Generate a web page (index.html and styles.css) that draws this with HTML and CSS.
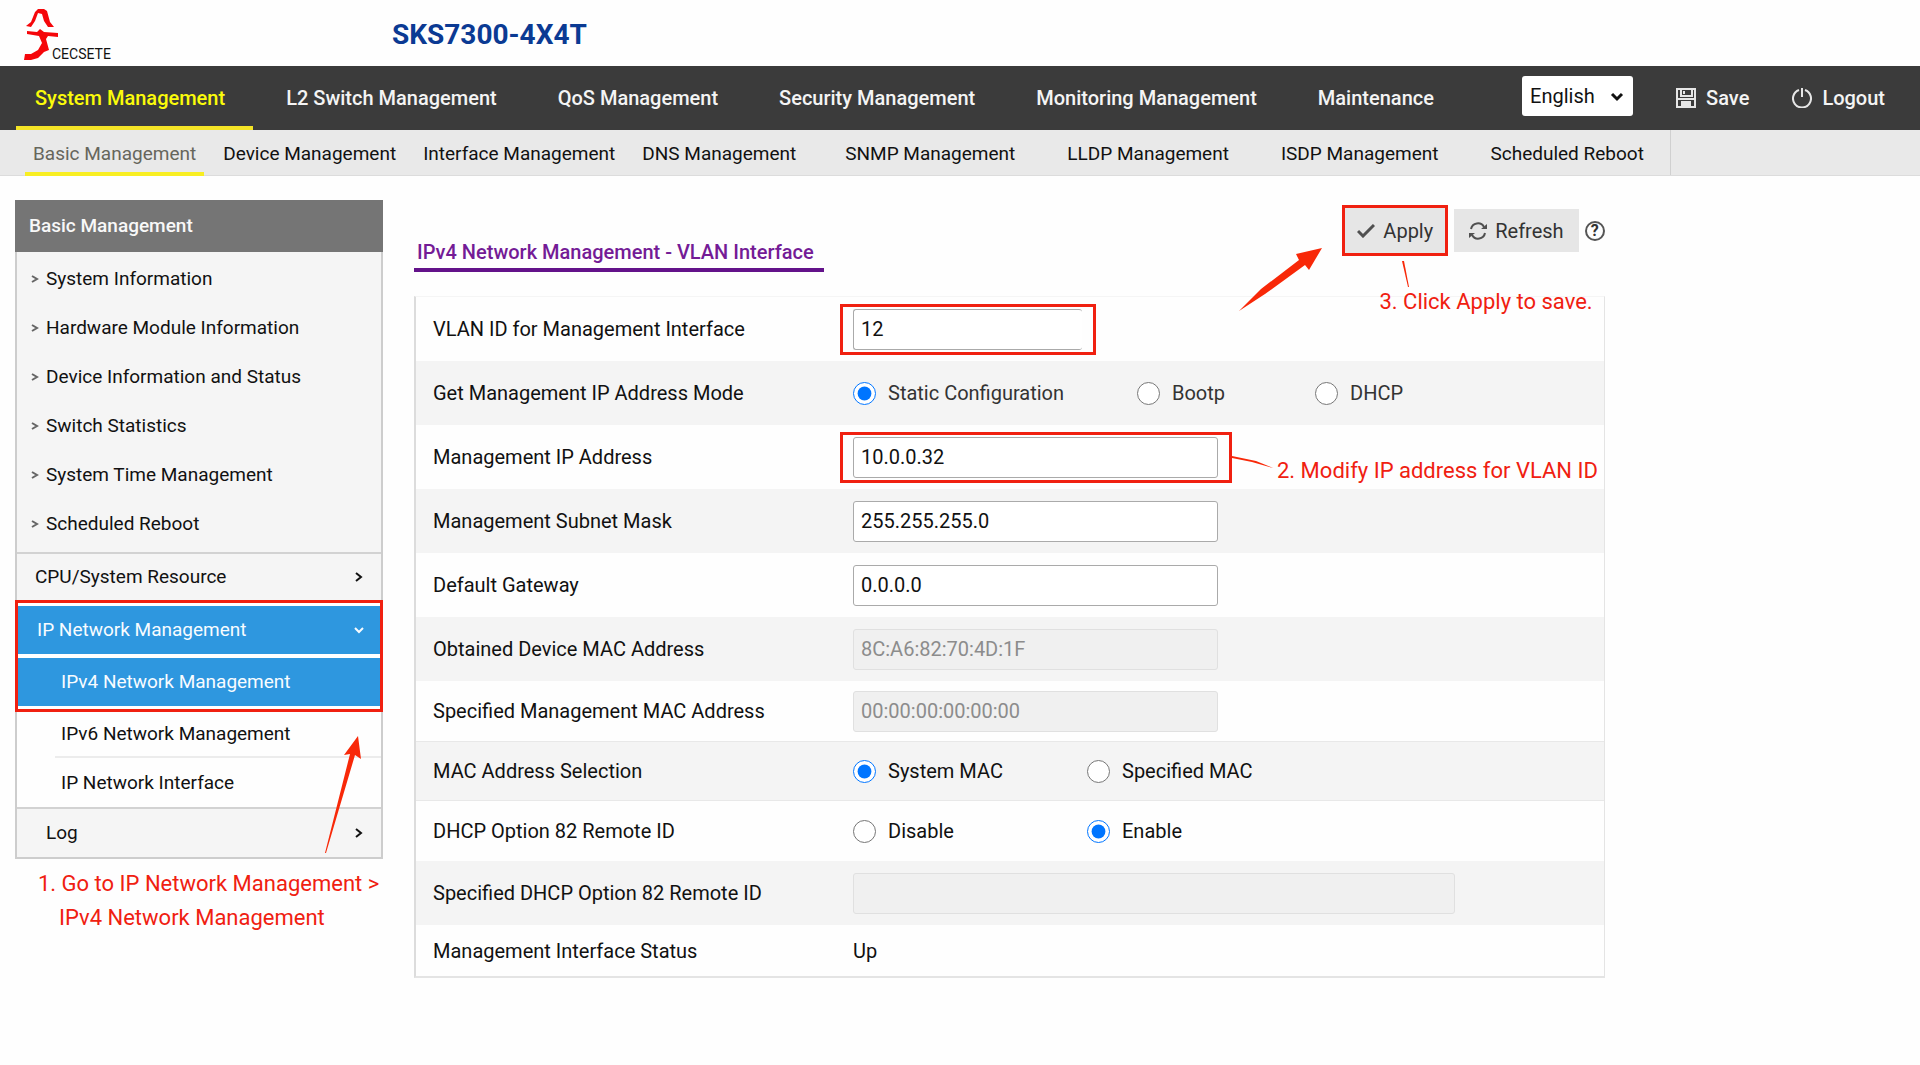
FILE: index.html
```html
<!DOCTYPE html>
<html lang="en">
<head>
    <meta charset="UTF-8">
    <meta name="viewport" content="width=device-width, initial-scale=1.0">
    <title>SKS7300-4X4T</title>
    <link rel="stylesheet" href="styles.css">
</head>
<body>
    <!-- Logo and model name -->
    <header class="header">
        <div class="logo">
            <svg class="logo-mark" width="38" height="54" viewBox="0 0 38 54" aria-hidden="true">
                <path d="M14 1 L20 1 L23 3 L26 14 L30 19 L24 19 L20 13 L18 6 L14 5 L11 13 L7 19 L2 18 L7 14 L11 4 Z" fill="#f5060a"/>
                <path d="M3 23 L13 24 L16 21 L20 24 L34 25 L34 29 L24 28 L22 31 L25 42 L20 44 L14 50 L7 52 L0 52 L1 46 L7 46 L14 42 L18 35 L15 28 L3 26 Z" fill="#f5060a"/>
            </svg>
            <span class="logo-text">CECSETE</span>
        </div>
        <h1 class="model">SKS7300-4X4T</h1>
    </header>

    <!-- Main menu -->
    <nav class="nav">
        <ul class="nav-list">
            <li><a class="nav-link active" href="#">System Management</a></li>
            <li><a class="nav-link" href="#">L2 Switch Management</a></li>
            <li><a class="nav-link" href="#">QoS Management</a></li>
            <li><a class="nav-link" href="#">Security Management</a></li>
            <li><a class="nav-link" href="#">Monitoring Management</a></li>
            <li><a class="nav-link" href="#">Maintenance</a></li>
        </ul>
        <div class="nav-tools">
            <div class="language">
                <select aria-label="Language">
                    <option>English</option>
                </select>
                <svg class="language-arrow" width="14" height="10" viewBox="0 0 14 10" aria-hidden="true">
                    <path d="M2 2 L7 7 L12 2" fill="none" stroke="#111" stroke-width="3"/>
                </svg>
            </div>
            <button class="tool" type="button">
                <svg width="20" height="20" viewBox="0 0 20 20" fill="none" stroke="#e6e6e6" stroke-width="2" aria-hidden="true">
                    <path d="M1 1 H19 V19 H1 Z M5 1 V8 H16 V1 M8 3 V6 M1 11 H19"/>
                    <path d="M6 19 V14 H14 V19 Z" fill="#e6e6e6"/>
                </svg>
                Save
            </button>
            <button class="tool" type="button">
                <svg width="20" height="20" viewBox="0 0 20 20" fill="none" stroke="#e6e6e6" stroke-width="2" aria-hidden="true">
                    <path d="M7 2 A9 9 0 1 0 13 2 M10 0 V9"/>
                </svg>
                Logout
            </button>
        </div>
    </nav>

    <nav class="subnav">
        <ul class="subnav-list">
            <li><a class="subnav-link active" href="#">Basic Management</a></li>
            <li><a class="subnav-link" href="#">Device Management</a></li>
            <li><a class="subnav-link" href="#">Interface Management</a></li>
            <li><a class="subnav-link" href="#">DNS Management</a></li>
        </ul>
        <ul class="subnav-list wide">
            <li><a class="subnav-link" href="#">SNMP Management</a></li>
            <li><a class="subnav-link" href="#">LLDP Management</a></li>
            <li><a class="subnav-link" href="#">ISDP Management</a></li>
            <li><a class="subnav-link" href="#">Scheduled Reboot</a></li>
        </ul>
    </nav>

    <div class="page">
        <!-- Left menu -->
        <aside class="sidebar">
            <div class="menu">
                <h2 class="menu-title">Basic Management</h2>
                <ul class="menu-list">
                    <li><a class="menu-item" href="#"><svg class="bullet" viewBox="0 0 8 8"><path d="M1 1 L6 4 L1 7"/></svg>System Information</a></li>
                    <li><a class="menu-item" href="#"><svg class="bullet" viewBox="0 0 8 8"><path d="M1 1 L6 4 L1 7"/></svg>Hardware Module Information</a></li>
                    <li><a class="menu-item" href="#"><svg class="bullet" viewBox="0 0 8 8"><path d="M1 1 L6 4 L1 7"/></svg>Device Information and Status</a></li>
                    <li><a class="menu-item" href="#"><svg class="bullet" viewBox="0 0 8 8"><path d="M1 1 L6 4 L1 7"/></svg>Switch Statistics</a></li>
                    <li><a class="menu-item" href="#"><svg class="bullet" viewBox="0 0 8 8"><path d="M1 1 L6 4 L1 7"/></svg>System Time Management</a></li>
                    <li><a class="menu-item" href="#"><svg class="bullet" viewBox="0 0 8 8"><path d="M1 1 L6 4 L1 7"/></svg>Scheduled Reboot</a></li>
                </ul>
                <a class="menu-group" href="#">CPU/System Resource
                    <svg class="chevron" viewBox="0 0 10 10"><path d="M2 1 L7 5 L2 9"/></svg>
                </a>
                <div class="menu-marked">
                    <a class="menu-open" href="#">IP Network Management
                        <svg class="chevron" viewBox="0 0 10 10"><path d="M1 3 L5 7 L9 3"/></svg>
                    </a>
                    <a class="menu-open sub" href="#">IPv4 Network Management</a>
                </div>
                <a class="menu-sub" href="#">IPv6 Network Management</a>
                <a class="menu-sub last" href="#">IP Network Interface</a>
                <a class="menu-group log" href="#">Log
                    <svg class="chevron" viewBox="0 0 10 10"><path d="M2 1 L7 5 L2 9"/></svg>
                </a>
                <svg class="arrow-menu" width="40" height="120" viewBox="0 0 40 120" aria-hidden="true">
                    <path d="M0 118 L25 19 L19 20 L33 1 L36 24 L30 20 L1 118 Z"/>
                </svg>
            </div>
            <p class="note note-menu">1. Go to IP Network Management &gt;<br><span>IPv4 Network Management</span></p>
        </aside>

        <!-- Interface settings -->
        <main class="main">
            <form>
                <div class="toolbar">
                    <h2 class="title">IPv4 Network Management - VLAN Interface</h2>
                    <div class="buttons">
                        <button class="button marked" type="button">
                            <svg width="18" height="14" viewBox="0 0 18 14" fill="none" stroke="#505050" stroke-width="3" aria-hidden="true">
                                <path d="M1 7 L6 12 L17 1"/>
                            </svg>
                            Apply
                        </button>
                        <button class="button" type="button">
                            <svg width="18" height="18" viewBox="0 0 18 18" fill="none" stroke="#505050" stroke-width="2" aria-hidden="true">
                                <path d="M2 7 A7 7 0 0 1 15 5 M16 11 A7 7 0 0 1 3 13"/>
                                <path d="M12 7 H18 V2 Z M6 11 H0 V16 Z" fill="#505050" stroke="none"/>
                            </svg>
                            Refresh
                        </button>
                        <button class="help" type="button" aria-label="Help">?</button>
                    </div>
                    <svg class="arrow-apply" width="84" height="64" viewBox="0 0 84 64" aria-hidden="true">
                        <path d="M0 63 L22 41 L60 12 L57 6 L83 0 L70 22 L66 17 L26 46 Z"/>
                    </svg>
                    <svg class="line-apply" width="10" height="28" viewBox="0 0 10 28" aria-hidden="true">
                        <path d="M1 1 L3 1 L8 27 L7 27 Z"/>
                    </svg>
                    <p class="note note-apply">3. Click Apply to save.</p>
                </div>

                <div class="panel">
                    <div class="row">
                        <label class="label" for="vlan">VLAN ID for Management Interface</label>
                        <div class="field marked"><input class="input small" type="text" id="vlan" value="12"></div>
                    </div>
                    <div class="row">
                        <span class="label" id="mode-label">Get Management IP Address Mode</span>
                        <div class="modes" role="radiogroup" aria-labelledby="mode-label">
                            <label class="option"><input type="radio" name="mode" checked>Static Configuration</label>
                            <label class="option"><input type="radio" name="mode">Bootp</label>
                            <label class="option"><input type="radio" name="mode">DHCP</label>
                        </div>
                    </div>
                    <div class="row">
                        <label class="label" for="ip">Management IP Address</label>
                        <div class="field marked">
                            <input class="input" type="text" id="ip" value="10.0.0.32">
                            <svg class="line-ip" width="42" height="16" viewBox="0 0 42 16" aria-hidden="true">
                                <path d="M0 1 L24 6 L41 13 L20 7 L0 3 Z"/>
                            </svg>
                            <p class="note note-ip">2. Modify IP address for VLAN ID</p>
                        </div>
                    </div>
                    <div class="row">
                        <label class="label" for="mask">Management Subnet Mask</label>
                        <div class="field"><input class="input" type="text" id="mask" value="255.255.255.0"></div>
                    </div>
                    <div class="row">
                        <label class="label" for="gateway">Default Gateway</label>
                        <div class="field"><input class="input" type="text" id="gateway" value="0.0.0.0"></div>
                    </div>
                    <div class="row">
                        <label class="label" for="device-mac">Obtained Device MAC Address</label>
                        <div class="field"><input class="input" type="text" id="device-mac" value="8C:A6:82:70:4D:1F" disabled></div>
                    </div>
                    <div class="row compact">
                        <label class="label" for="management-mac">Specified Management MAC Address</label>
                        <div class="field"><input class="input" type="text" id="management-mac" value="00:00:00:00:00:00" disabled></div>
                    </div>
                    <div class="row compact">
                        <span class="label" id="mac-label">MAC Address Selection</span>
                        <div class="choices" role="radiogroup" aria-labelledby="mac-label">
                            <label class="option"><input type="radio" name="mac" checked>System MAC</label>
                            <label class="option"><input type="radio" name="mac">Specified MAC</label>
                        </div>
                    </div>
                    <div class="row compact">
                        <span class="label" id="dhcp-label">DHCP Option 82 Remote ID</span>
                        <div class="choices" role="radiogroup" aria-labelledby="dhcp-label">
                            <label class="option"><input type="radio" name="option82">Disable</label>
                            <label class="option"><input type="radio" name="option82" checked>Enable</label>
                        </div>
                    </div>
                    <div class="row">
                        <label class="label" for="remote-id">Specified DHCP Option 82 Remote ID</label>
                        <div class="field"><input class="input large" type="text" id="remote-id" disabled></div>
                    </div>
                    <div class="row status">
                        <span class="label">Management Interface Status</span>
                        <span>Up</span>
                    </div>
                </div>
            </form>
        </main>
    </div>
</body>
</html>
```
FILE: styles.css
```css
* {
    box-sizing: border-box;
}
body {
    margin: 0;
    background-color: #fefefe;
    color: #111;
    font-family: Roboto, "Liberation Sans", sans-serif;
    font-size: 20px;
    line-height: 24px;
}
h1, h2, p, ul {
    margin: 0;
    padding: 0;
}
ul {
    list-style: none;
}
a {
    color: inherit;
    text-decoration: none;
}
button, input, select {
    font: inherit;
    color: inherit;
}

/* Header */
.header {
    display: flex;
    align-items: center;
    height: 66px;
    padding: 4px 24px 0;
}
.logo {
    display: flex;
    align-items: flex-end;
    width: 368px;
}
.logo-text {
    margin-left: -10px;
    font-size: 14px;
    line-height: 16px;
}
.model {
    color: #0b3a93;
    font-size: 28px;
    font-weight: 700;
}

/* Main menu */
.nav {
    display: flex;
    justify-content: space-between;
    height: 64px;
    padding: 0 35px 0 16px;
    background-color: #3b3b3b;
    color: #f4f4f4;
    font-weight: 500;
}
.nav-list {
    display: flex;
    gap: 14px;
}
.nav-link {
    display: flex;
    align-items: center;
    height: 64px;
    padding: 8px 28px 4px 19px;
    border-bottom: 4px solid transparent;
}
.nav-link.active {
    border-bottom-color: #f4e426;
    color: #fbfb0a;
}
.nav-tools {
    display: flex;
    align-items: center;
    gap: 43px;
}
.language {
    position: relative;
}
.language select {
    appearance: none;
    width: 111px;
    height: 40px;
    margin-bottom: 4px;
    padding: 0 8px;
    border: 0;
    border-radius: 3px;
    background-color: #fff;
    color: #111;
    font-weight: 400;
    vertical-align: top;
}
.language-arrow {
    position: absolute;
    right: 9px;
    top: 16px;
}
.tool {
    display: flex;
    align-items: center;
    gap: 10px;
    padding: 0;
    border: 0;
    background: none;
    cursor: pointer;
}

/* Second menu */
.subnav {
    display: flex;
    height: 46px;
    padding-left: 25px;
    border-bottom: 1px solid #dcdcdc;
    background-color: #e9e9e9;
    font-size: 19px;
}
.subnav-list {
    display: flex;
    gap: 11px;
}
.subnav-list.wide {
    gap: 36px;
    padding: 0 18px 0 33px;
    border-right: 1px solid #d0d0d0;
}
.subnav-link {
    display: flex;
    align-items: center;
    height: 46px;
    padding: 6px 8px 0;
    border-bottom: 4px solid transparent;
}
.subnav-link.active {
    border-bottom-color: #f8ee22;
    color: #66665c;
}

/* Page body */
.page {
    display: flex;
    align-items: flex-start;
    gap: 31px;
    padding: 24px 0 0 15px;
}
.sidebar {
    flex: none;
    width: 368px;
}
.menu {
    position: relative;
    border: 2px solid #cdcdcd;
    border-top: 0;
    font-size: 19px;
}
.menu-title {
    margin: 0 -2px;
    padding: 14px;
    background-color: #757575;
    color: #f8f8f8;
    font-size: 19px;
    font-weight: 500;
}
.menu-list {
    padding: 2px 0 4px;
    border-bottom: 2px solid #d2d2d2;
    background-color: #f5f5f5;
}
.menu-item {
    display: flex;
    align-items: center;
    height: 49px;
    padding-left: 14px;
}
.menu-item svg {
    flex: none;
}
.bullet {
    width: 8px;
    height: 8px;
    margin-right: 7px;
    fill: none;
    stroke: #666;
    stroke-width: 2;
}
.chevron {
    width: 10px;
    height: 10px;
    fill: none;
    stroke: currentColor;
    stroke-width: 2;
}
.menu-group {
    display: flex;
    align-items: center;
    justify-content: space-between;
    height: 46px;
    padding: 0 17px 0 18px;
    background-color: #f5f5f5;
}
.menu-group.log {
    height: 48px;
    padding-left: 29px;
}
.menu-marked {
    display: flex;
    flex-direction: column;
    gap: 4px;
    margin: 0 -2px;
    padding: 3px 0;
    border: 3px solid #f02010;
    background-color: #fff;
}
.menu-open {
    display: flex;
    align-items: center;
    justify-content: space-between;
    height: 48px;
    padding: 0 16px 0 19px;
    background-color: #2e97df;
    color: #f8fcff;
}
.menu-open.sub {
    padding-left: 43px;
}
.menu-sub {
    display: flex;
    align-items: center;
    height: 46px;
    margin-left: 38px;
    padding-left: 6px;
    border-bottom: 2px solid #ececec;
}
.menu-sub.last {
    height: 51px;
    margin-left: 0;
    padding-left: 44px;
    border-bottom-color: #d2d2d2;
}

/* Settings */
.main {
    width: 62.5%;
}
.toolbar {
    display: flex;
    align-items: flex-start;
    justify-content: space-between;
    position: relative;
    height: 96px;
}
.title {
    margin-top: 40px;
    padding: 0 10px 4px 3px;
    border-bottom: 4px solid #63128a;
    color: #741b96;
    font-size: 20px;
    font-weight: 500;
}
.buttons {
    display: flex;
    align-items: center;
    gap: 6px;
    padding-top: 5px;
}
.button {
    display: flex;
    align-items: center;
    gap: 8px;
    height: 43px;
    padding: 0 15px;
    border: 0;
    background-color: #e6e6e6;
    color: #333;
    cursor: pointer;
}
.button.marked {
    height: 51px;
    padding: 0 12px;
    border: 3px solid #f02010;
}
.help {
    width: 20px;
    height: 20px;
    padding: 0;
    border: 2px solid #555;
    border-radius: 50%;
    background: none;
    color: #333;
    font-size: 16px;
    font-weight: 700;
    line-height: 16px;
}
.panel {
    border: 1px solid #e4e4e4;
    border-top-color: #f5f5f5;
    border-bottom-width: 2px;
    border-left: 2px solid #dcdcdc;
}
.row {
    display: flex;
    align-items: center;
    height: 64px;
}
.row:nth-child(even) {
    background-color: #f4f4f4;
}
.row.compact {
    height: 60px;
}
.row.compact:nth-child(even) {
    border-top: 1px solid #e8e8e8;
    border-bottom: 1px solid #e8e8e8;
}
.row.status {
    height: 51px;
}
.label {
    flex: none;
    width: 437px;
    padding-left: 17px;
}
.field {
    position: relative;
}
.field.marked::after {
    content: "";
    position: absolute;
    inset: -5px -14px -5px -13px;
    border: 3px solid #f02010;
    pointer-events: none;
}
.input {
    display: block;
    width: 365px;
    height: 41px;
    padding: 0 7px;
    border: 1px solid #aaa;
    border-radius: 3px;
    background-color: #fff;
}
.input.small {
    width: 229px;
    border-right: 0;
}
.input.large {
    width: 602px;
}
.input:disabled {
    border-color: #e0e0e0;
    background-color: #f0f0f0;
    color: #8c8c8c;
}
.modes, .choices {
    display: grid;
    grid-template-columns: 284px 178px auto;
}
.choices {
    grid-template-columns: 234px auto;
}
.option {
    display: flex;
    align-items: center;
    gap: 12px;
}
.option input {
    width: 23px;
    height: 23px;
    margin: 0;
}
.modes .option {
    color: #333;
}

/* Step notes */
.note {
    color: #f02010;
    font-size: 22px;
    line-height: 34px;
    white-space: nowrap;
}
.note-menu {
    padding: 8px 0 0 23px;
}
.note-menu span {
    padding-left: 21px;
}
.note-apply {
    position: absolute;
    right: 12px;
    top: 85px;
}
.note-ip {
    position: absolute;
    left: 424px;
    top: 17px;
}
.arrow-menu, .arrow-apply, .line-apply, .line-ip {
    position: absolute;
    fill: #f82808;
}
.arrow-menu {
    left: 308px;
    bottom: 2px;
}
.arrow-apply {
    right: 282px;
    top: 48px;
}
.line-apply {
    right: 194px;
    top: 60px;
}
.line-ip {
    left: 379px;
    top: 18px;
}
```
